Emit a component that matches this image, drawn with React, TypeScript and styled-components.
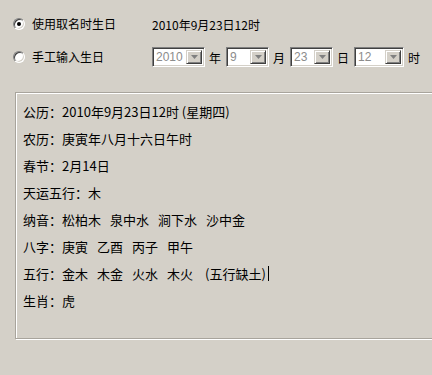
import styled, { createGlobalStyle } from 'styled-components'

const GlobalStyle = createGlobalStyle`
    html, body {
        margin: 0;
        padding: 0;
        background: #d4d0c8;
    }
    body {
        font-family: "Noto Sans CJK SC", "DejaVu Sans", sans-serif;
        color: #000;
    }
`

const combos = [
    { value: '2010', unit: '年', width: 53 },
    { value: '9', unit: '月', width: 43 },
    { value: '23', unit: '日', width: 43 },
    { value: '12', unit: '时', width: 50 },
]

const lines: { label: string; parts: string[]; caret?: boolean }[] = [
    { label: '公历：', parts: ['2010年9月23日12时 (星期四)'] },
    { label: '农历：', parts: ['庚寅年八月十六日午时'] },
    { label: '春节：', parts: ['2月14日'] },
    { label: '天运五行：', parts: ['木'] },
    { label: '纳音：', parts: ['松柏木', '泉中水', '涧下水', '沙中金'] },
    { label: '八字：', parts: ['庚寅', '乙酉', '丙子', '甲午'] },
    { label: '五行：', parts: ['金木', '木金', '火水', '木火', ' (五行缺土)'], caret: true },
    { label: '生肖：', parts: ['虎'] },
]

const App = () => {
    return (
        <Page>
            <GlobalStyle />
            <Row $top={14}>
                <Choice>
                    <Radio $checked />
                    使用取名时生日
                </Choice>
                <DateText>2010年9月23日12时</DateText>
            </Row>

            <Row $top={13}>
                <Choice>
                    <Radio />
                    手工输入生日
                </Choice>
                <Combos>
                    {combos.map((c) => (
                        <ComboGroup key={c.unit}>
                            <Combo $width={c.width}>
                                <ComboValue>{c.value}</ComboValue>
                                <DropButton>
                                    <svg width="7" height="4" viewBox="0 0 7 4">
                                        <path d="M0 0h7L3.5 4z" fill="#808080" />
                                    </svg>
                                </DropButton>
                            </Combo>
                            <Unit>{c.unit}</Unit>
                        </ComboGroup>
                    ))}
                </Combos>
            </Row>

            <Panel>
                {lines.map((l) => (
                    <Line key={l.label}>
                        <span>{l.label}</span>
                        <Parts>
                            {l.parts.map((p) => (
                                <span key={p}>{p}</span>
                            ))}
                        </Parts>
                        {l.caret && <Caret />}
                    </Line>
                ))}
            </Panel>
        </Page>
    )
}

const Page = styled.div`
    width: 432px;
    height: 375px;
    overflow: hidden;
    background: #d4d0c8;
    font-size: 12px;
`

const Row = styled.div<{ $top: number }>`
    display: flex;
    align-items: center;
    height: 20px;
    margin-top: ${(p) => p.$top}px;
    padding-left: 13px;
`

const Choice = styled.label`
    display: flex;
    align-items: center;
    gap: 7px;
    width: 139px;
    font-size: 12px;
    line-height: 20px;
`

const Radio = styled.span<{ $checked?: boolean }>`
    position: relative;
    box-sizing: border-box;
    width: 12px;
    height: 12px;
    border-radius: 50%;
    background: #fff;
    border: 1px solid;
    border-color: #808080 #ffffff #ffffff #808080;
    box-shadow: inset 1px 1px 0 #404040, inset -1px -1px 0 #d4d0c8;

    &::after {
        content: '';
        display: ${(p) => (p.$checked ? 'block' : 'none')};
        position: absolute;
        left: 3px;
        top: 3px;
        width: 4px;
        height: 4px;
        border-radius: 50%;
        background: #000;
    }
`

const DateText = styled.span`
    font-size: 12px;
`

const Combos = styled.div`
    display: flex;
    align-items: center;
    gap: 5px;
`

const ComboGroup = styled.div`
    display: flex;
    align-items: center;
    gap: 4px;
`

const Combo = styled.div<{ $width: number }>`
    box-sizing: border-box;
    display: flex;
    align-items: center;
    justify-content: space-between;
    width: ${(p) => p.$width}px;
    height: 20px;
    background: #fff;
    border: 1px solid;
    border-color: #808080 #ffffff #ffffff #808080;
    box-shadow: inset 1px 1px 0 #404040, inset -1px -1px 0 #d4d0c8;
    padding: 2px 2px 2px 3px;
`

const ComboValue = styled.span`
    color: #8c8c8c;
    font-family: "Liberation Sans", sans-serif;
    font-size: 12px;
    line-height: 14px;
`

const DropButton = styled.span`
    box-sizing: border-box;
    display: flex;
    align-items: center;
    justify-content: center;
    width: 16px;
    height: 14px;
    background: #d4d0c8;
    border: 1px solid;
    border-color: #d4d0c8 #404040 #404040 #d4d0c8;
    box-shadow: inset 1px 1px 0 #fff, inset -1px -1px 0 #808080;
`

const Unit = styled.span`
    font-size: 12px;
`

const Panel = styled.div`
    box-sizing: border-box;
    margin: 25px 0 0 15px;
    width: 440px;
    height: 247px;
    border: 1px solid;
    border-color: #a8a49c;
    box-shadow: inset 1px 1px 0 #fff, 1px 1px 0 #fff;
    padding: 5px 0 0 7px;
    font-size: 13px;
`

const Line = styled.div`
    display: flex;
    align-items: center;
    height: 27px;
    white-space: pre;
`

const Parts = styled.span`
    display: flex;
    gap: 9px;
`

const Caret = styled.span`
    width: 1px;
    height: 15px;
    margin-left: 2px;
    background: #000;
`

export default App
